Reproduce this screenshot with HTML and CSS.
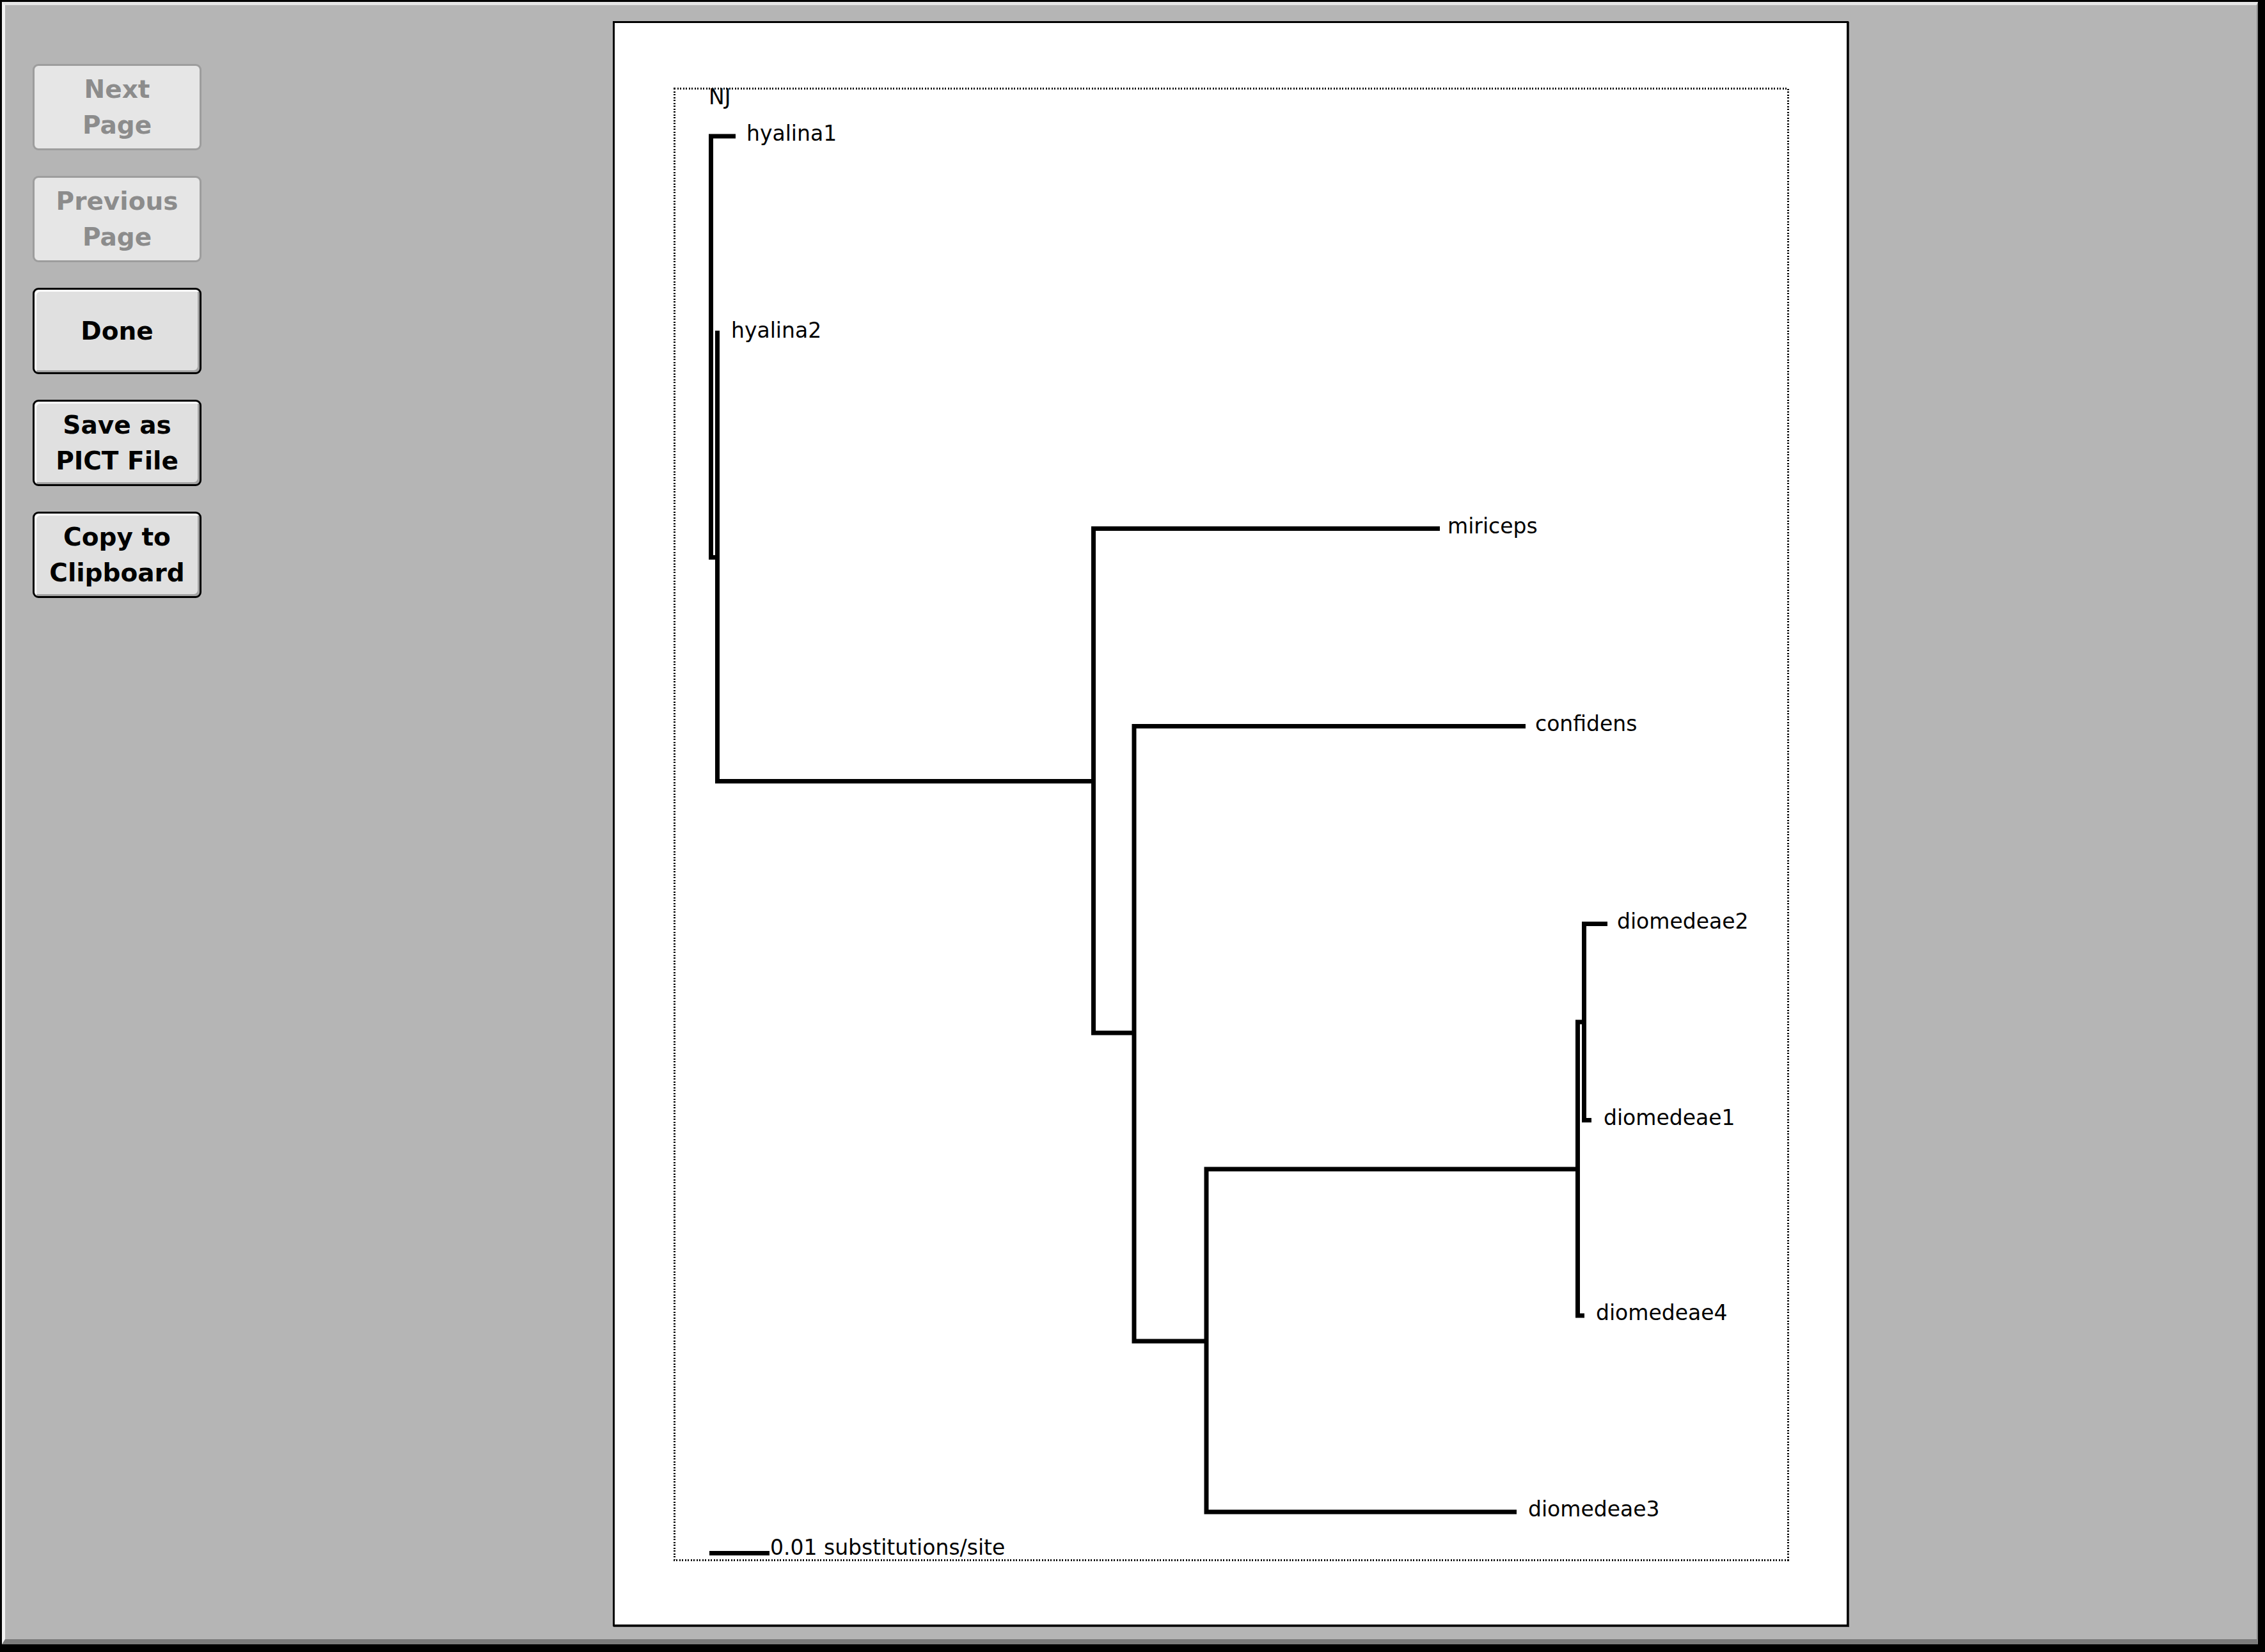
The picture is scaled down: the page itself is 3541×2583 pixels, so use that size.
FILE: index.html
```html
<!DOCTYPE html>
<html lang="en">

<head>
  <meta charset="UTF-8">
  <title>Tree Preview</title>
  <link rel="stylesheet" href="styles.css">
</head>

<body>
  <div class="dialog">
    <!-- COMMAND BUTTONS -->
    <div class="sidebar">
      <button class="btn" disabled>Next<br>Page</button>
      <button class="btn" disabled>Previous<br>Page</button>
      <button class="btn">Done</button>
      <button class="btn">Save as<br>PICT File</button>
      <button class="btn">Copy to<br>Clipboard</button>
    </div>

    <!-- PRINT PREVIEW -->
    <div class="stage">
      <div class="page">
        <svg class="tree" width="1926" height="2504" viewBox="961 36 1926 2504" xmlns="http://www.w3.org/2000/svg">
          <rect class="tree__frame" x="1054" y="138" width="1741" height="2301"></rect>

          <text class="tree__label" x="1108" y="163">NJ</text>

          <g class="tree__branches">
            <path d="M1150 213 H1111.5 V871.5 H1121.5"></path>
            <path d="M1121.5 517 V1221.5 H1709.5"></path>
            <path d="M2251 826.5 H1709.5 V1615 H1773"></path>
            <path d="M2385 1135.5 H1773 V2097 H1886"></path>
            <path d="M2466.5 1828 H1886 V2364 H2371"></path>
            <path d="M2476.5 1598 H2466.5 V2057 H2477"></path>
            <path d="M2513 1444.5 H2476.5 V1751.5 H2488"></path>
          </g>

          <text class="tree__label" x="1167" y="220">hyalina1</text>
          <text class="tree__label" x="1143" y="528">hyalina2</text>
          <text class="tree__label" x="2263" y="834">miriceps</text>
          <text class="tree__label" x="2400" y="1143">confidens</text>
          <text class="tree__label" x="2528" y="1452">diomedeae2</text>
          <text class="tree__label" x="2507" y="1759">diomedeae1</text>
          <text class="tree__label" x="2495" y="2064">diomedeae4</text>
          <text class="tree__label" x="2389" y="2371">diomedeae3</text>

          <!-- SCALE BAR -->
          <path class="tree__scale" d="M1109 2428.5 H1203"></path>
          <text class="tree__label" x="1204" y="2431">0.01 substitutions/site</text>
        </svg>
      </div>
    </div>
  </div>
</body>

</html>
```

FILE: styles.css
```css
:root {
  --frameColor: #000;
  --dialogBgColor: #b5b5b5;
  --buttonFaceColor: #e0e0e0;
  --buttonDisabledFaceColor: #e6e6e6;
  --buttonDisabledColor: #8c8c8c;
  --buttonDisabledBorder: #9d9d9d;
  --pageBgColor: #fff;
  --inkColor: #000;
}

* {
  box-sizing: border-box;
}

html,
body {
  height: 100%;
}

body {
  margin: 0;
  padding: 3px 11px 12px 3px;
  background-color: var(--frameColor);
  overflow: hidden;
}

.dialog {
  display: flex;
  height: 100%;
  background-color: var(--dialogBgColor);
  border-top: 5px solid #e6e6e6;
  border-left: 5px solid #f2f2f2;
  border-right: 2px solid #8a8a8a;
  border-bottom: 8px solid #7b7b7b;
}

.sidebar {
  display: flex;
  flex-direction: column;
  gap: 40px;
  flex: 0 0 950px;
  padding: 92px 0 0 43px;
}

.btn {
  display: block;
  width: 264px;
  height: 135px;
  margin: 0;
  padding: 0;
  border: 3px solid #000;
  border-radius: 9px;
  background-color: var(--buttonFaceColor);
  box-shadow: inset 3px 3px 0 #fff, inset -3px -3px 0 #a2a2a2;
  color: #000;
  font-family: "DejaVu Sans", sans-serif;
  font-size: 39px;
  font-weight: 700;
  line-height: 56px;
  text-align: center;
}

.btn:disabled {
  border: 3px solid var(--buttonDisabledBorder);
  background-color: var(--buttonDisabledFaceColor);
  box-shadow: none;
  color: var(--buttonDisabledColor);
}

.stage {
  flex: 1;
  padding-top: 25px;
}

.page {
  width: 1932px;
  height: 2510px;
  background-color: var(--pageBgColor);
  border: 3px solid #000;
  box-shadow: 1px 1px 0 #333;
}

.tree {
  display: block;
}

.tree__frame {
  fill: none;
  stroke: var(--inkColor);
  stroke-width: 3;
  stroke-dasharray: 2 2.5;
  shape-rendering: crispEdges;
}

.tree__branches path,
.tree__scale {
  fill: none;
  stroke: var(--inkColor);
  stroke-width: 7;
  stroke-linejoin: miter;
}

.tree__label {
  fill: var(--inkColor);
  font-family: "DejaVu Sans", sans-serif;
  font-size: 33px;
}
```
